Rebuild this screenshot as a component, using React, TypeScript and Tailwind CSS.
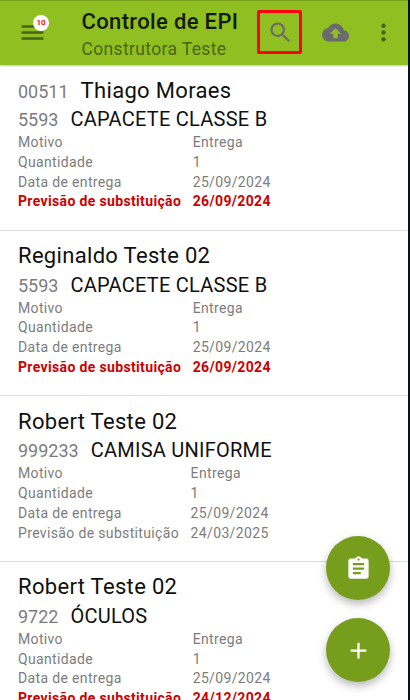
import { MdMenu, MdSearch, MdCloudUpload, MdMoreVert, MdAssignment, MdAdd } from "react-icons/md";

type Delivery = {
  code?: string;
  name: string;
  itemCode: string;
  item: string;
  delivered: string;
  replacement: string;
  late: boolean;
};

const deliveries: Delivery[] = [
  { code: "00511", name: "Thiago Moraes", itemCode: "5593", item: "CAPACETE CLASSE B", delivered: "25/09/2024", replacement: "26/09/2024", late: true },
  { name: "Reginaldo Teste 02", itemCode: "5593", item: "CAPACETE CLASSE B", delivered: "25/09/2024", replacement: "26/09/2024", late: true },
  { name: "Robert Teste 02", itemCode: "999233", item: "CAMISA UNIFORME", delivered: "25/09/2024", replacement: "24/03/2025", late: false },
  { name: "Robert Teste 02", itemCode: "9722", item: "ÓCULOS", delivered: "25/09/2024", replacement: "24/12/2024", late: true },
];

const Header = () => (
  <header className="relative z-10 flex h-[65px] shrink-0 items-center border-t border-[#78a11b] bg-[#90bf22] pb-[1px] pl-[17.5px] shadow-[0_1px_2px_rgba(0,0,0,0.25)]">
    <button className="relative">
      <MdMenu className="h-[29px] w-[29px] text-[#496112]" />
      <span className="absolute -top-[3px] left-[15.5px] flex h-4 w-4 items-center justify-center rounded-full bg-white text-[8px] font-bold text-[#ff1010]">
        10
      </span>
    </button>
    <div className="ml-[35px] w-[175px] pt-[4px] whitespace-nowrap">
      <h1 className="text-[22px] leading-[28px] font-medium tracking-[0.35px] text-[#141b05]">Controle de EPI</h1>
      <p className="text-[17.5px] leading-[26px] tracking-[0.35px] text-[#4c6512]">Construtora Teste</p>
    </div>
    <button className="mb-[1px] flex h-[44px] w-[45px] shrink-0 items-center justify-center rounded-[2px] border-[3px] border-[#ff0010] pt-[1px] pl-[2px]">
      <MdSearch className="h-[27px] w-[27px] shrink-0 text-[#6b6b6b]" />
    </button>
    <button className="ml-5">
      <MdCloudUpload className="h-[27px] w-[27px] text-[#6b6b6b]" />
    </button>
    <button className="ml-[21px]">
      <MdMoreVert className="h-[27px] w-[27px] text-[#496112]" />
    </button>
  </header>
);

const Row = ({ label, value, late = false }: { label: string; value: string; late?: boolean }) => (
  <tr className={late ? "font-bold text-[#cc0000]" : ""}>
    <td className="p-0 pr-[11.5px]">{label}</td>
    <td className="p-0">{value}</td>
  </tr>
);

const DeliveryCard = ({ delivery }: { delivery: Delivery }) => (
  <li className="h-[165.6px] shrink-0 border-b border-[#dcdcdc] pt-[10.5px] pl-[18px] whitespace-nowrap">
    <div className="flex h-[29.5px] items-baseline gap-3 text-[22px] leading-[30px] text-[#101010]">
      {delivery.code && <span className="text-[18px] text-[#7c7c7c]">{delivery.code}</span>}
      <span className="tracking-[0.32px]">{delivery.name}</span>
    </div>
    <div className="flex h-[28px] items-baseline gap-3 text-[20px] leading-[28px] text-[#101010]">
      <span className="text-[18px] text-[#7c7c7c]">{delivery.itemCode}</span>
      <span className="tracking-[0.25px]">{delivery.item}</span>
    </div>
    <table className="border-collapse text-[14px] leading-[19.8px] tracking-[0.35px] text-[#7c7c7c]">
      <tbody>
        <Row label="Motivo" value="Entrega" />
        <Row label="Quantidade" value="1" />
        <Row label="Data de entrega" value={delivery.delivered} />
        <Row label="Previsão de substituição" value={delivery.replacement} late={delivery.late} />
      </tbody>
    </table>
  </li>
);

const App = () => {
  return (
    <div className="h-[700px] w-[410px] overflow-hidden bg-[#07131c] pr-[2px] font-[Roboto,sans-serif]">
      <div className="relative flex h-full flex-col overflow-hidden bg-white">
        <Header />
        <ul className="flex flex-col">
          {deliveries.map((delivery, index) => (
            <DeliveryCard key={index} delivery={delivery} />
          ))}
        </ul>
        <div className="absolute right-[18px] bottom-[18px] z-20 flex flex-col gap-[18px] text-white">
          <button className="flex h-16 w-16 items-center justify-center rounded-full bg-[#769e1c] shadow-[0_4px_8px_rgba(0,0,0,0.28)]">
            <MdAssignment className="h-[27px] w-[27px]" />
          </button>
          <button className="flex h-16 w-16 items-center justify-center rounded-full bg-[#769e1c] shadow-[0_4px_8px_rgba(0,0,0,0.28)]">
            <MdAdd className="h-[27px] w-[27px]" />
          </button>
        </div>
      </div>
    </div>
  );
};

export default App;
